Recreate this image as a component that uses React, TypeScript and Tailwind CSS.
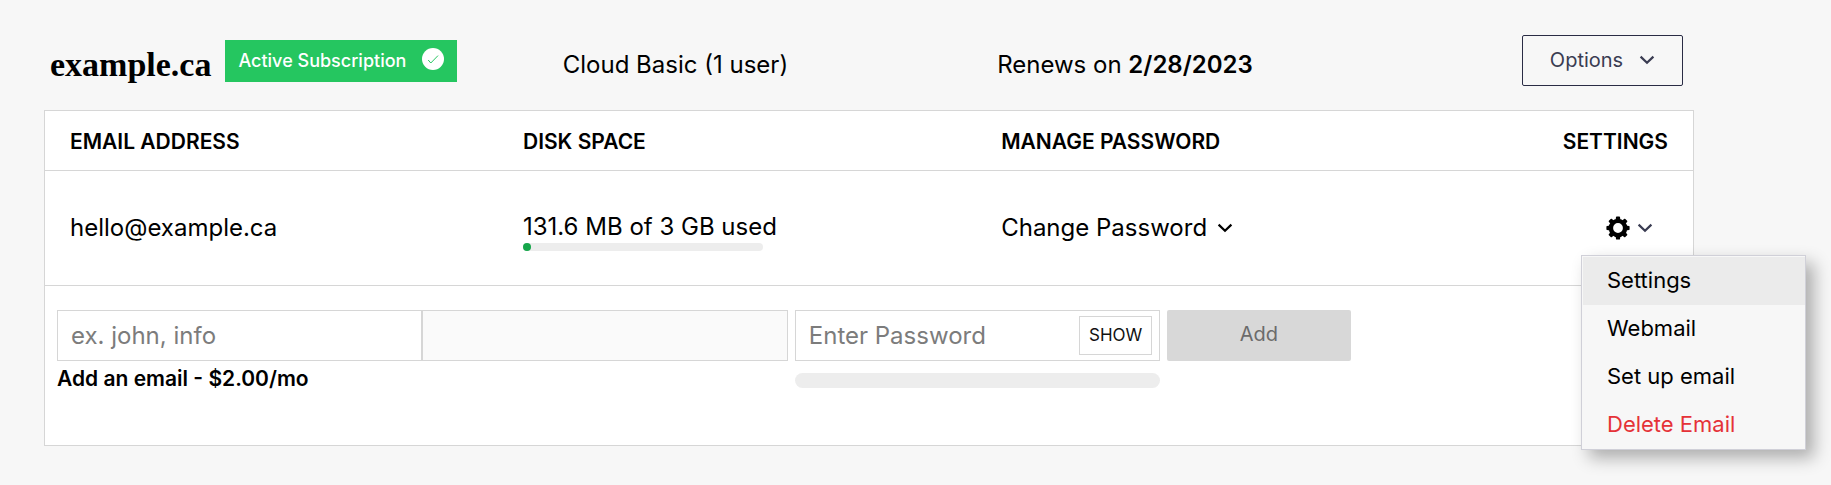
import { ReactNode } from "react";

function Chevron({ className = "" }: { className?: string }) {
  return (
    <svg viewBox="0 0 16 10" className={`h-[10px] w-4 shrink-0 ${className}`} fill="none" stroke="currentColor" strokeWidth="2.2" aria-hidden="true">
      <path d="M1.6 1.6 8 7.8l6.4-6.2" />
    </svg>
  );
}

function Gear() {
  const teeth = [0, 45, 90, 135, 180, 225, 270, 315];
  return (
    <svg viewBox="0 0 24 24" className="h-6 w-6 shrink-0" aria-hidden="true">
      <circle cx="12" cy="12" r="7.1" fill="none" stroke="currentColor" strokeWidth="4.4" />
      {teeth.map((angle) => (
        <path key={angle} d="M9.6 4 10 1q.1-.6.7-.6h2.6q.6 0 .7.6l.4 3z" fill="currentColor" transform={`rotate(${angle} 12 12)`} />
      ))}
    </svg>
  );
}

function CheckBadge() {
  return (
    <svg viewBox="0 0 22 22" className="-mt-1 h-[22px] w-[22px] shrink-0" aria-hidden="true">
      <circle cx="11" cy="11" r="11" fill="#fff" />
      <path d="m6.2 12 2.6 3L16 7.6" fill="none" stroke="#25c660" strokeWidth="1" />
    </svg>
  );
}

function HeaderCell({ children, className = "" }: { children: ReactNode; className?: string }) {
  return (
    <th scope="col" className={`h-[60px] px-[25px] pt-0.5 text-left text-[21px] leading-7 font-semibold whitespace-nowrap ${className}`}>
      {children}
    </th>
  );
}

const menuItems = [
  { label: "Settings", style: "bg-[#ebebeb]" },
  { label: "Webmail", style: "" },
  { label: "Set up email", style: "" },
  { label: "Delete Email", style: "text-[#e53238]" },
];

export default function App() {
  return (
    <main className="min-h-screen bg-[#f7f7f7] pt-[35px] pr-[137px] pb-9 pl-11 font-['Inter',sans-serif] text-black">
      <header className="flex h-[51px] pr-[11px] pl-[6px]">
        <div className="flex w-[31.4%] items-start gap-[14px] pt-[5px] whitespace-nowrap">
          <h1 className="pt-1 font-['Liberation_Serif',serif] text-[34px] leading-[42px] font-bold">example.ca</h1>
          <span className="flex h-[42px] items-center gap-4 bg-[#25c660] px-[13px] text-lg font-medium text-white">
            Active Subscription
            <CheckBadge />
          </span>
        </div>
        <p className="w-[26.6%] self-center pt-2 text-2xl whitespace-nowrap">Cloud Basic (1 user)</p>
        <p className="self-center pt-2 text-2xl whitespace-nowrap">
          Renews on <strong className="font-semibold">2/28/2023</strong>
        </p>
        <button type="button" className="ml-auto flex w-[161px] items-center justify-center gap-4 rounded-xs border border-[#2a2c45] pb-0.5 text-xl text-[#3a3c52]">
          Options
          <Chevron />
        </button>
      </header>

      <table className="mt-6 w-full table-fixed border-collapse border border-[#d6d6d6] bg-white">
        <colgroup>
          <col className="w-[27.5%]" />
          <col className="w-[29%]" />
          <col />
          <col className="w-[20%]" />
        </colgroup>
        <thead>
          <tr className="border-b border-[#d6d6d6]">
            <HeaderCell>EMAIL ADDRESS</HeaderCell>
            <HeaderCell>DISK SPACE</HeaderCell>
            <HeaderCell>MANAGE PASSWORD</HeaderCell>
            <HeaderCell className="text-right">SETTINGS</HeaderCell>
          </tr>
        </thead>
        <tbody>
          <tr className="h-[115px] border-b border-[#d6d6d6] text-2xl whitespace-nowrap">
            <td className="px-[25px]">hello@example.ca</td>
            <td className="px-[25px]">
              <div className="flex flex-col pt-[6px]">
                <span className="leading-8">131.6 MB of 3 GB used</span>
                <div className="h-2 w-60 rounded-sm bg-[#ededed]">
                  <div className="h-2 w-2 rounded-sm bg-[#16a64a]" />
                </div>
              </div>
            </td>
            <td className="px-[25px]">
              <button type="button" className="flex items-center gap-[10px]">
                Change Password
                <Chevron />
              </button>
            </td>
            <td className="pr-10">
              <div className="relative ml-auto w-fit">
                <button type="button" aria-label="Email settings" aria-expanded="true" className="flex items-center gap-[7px]">
                  <Gear />
                  <Chevron className="text-[#3a3c52]" />
                </button>
                <ul className="absolute top-[39px] -left-[25px] w-[225px] border border-[#d0d0d8] bg-[#f7f7f7] pt-px pl-px text-[22px] shadow-[8px_8px_16px_rgba(0,0,0,0.3)]">
                  {menuItems.map(({ label, style }) => (
                    <li key={label}>
                      <a href="#" className={`flex h-12 items-center pl-6 ${style}`}>
                        {label}
                      </a>
                    </li>
                  ))}
                </ul>
              </div>
            </td>
          </tr>
          <tr className="h-[160px] align-top">
            <td colSpan={4} className="px-3 pt-6">
              <form className="flex items-start">
                <div className="w-[22.5%]">
                  <input id="mailbox" type="text" placeholder="ex. john, info" className="block h-[51px] w-full border border-[#d6d6d6] px-[13px] text-2xl placeholder:text-[#7c7c7c]" />
                  <label htmlFor="mailbox" className="block pt-1 text-[21px] leading-7 font-semibold whitespace-nowrap">
                    Add an email - $2.00/mo
                  </label>
                </div>
                <input type="text" aria-label="Domain" disabled className="h-[51px] w-[22.5%] border border-[#d6d6d6] bg-[#fafafa]" />
                <div className="ml-[7px] w-[22.5%]">
                  <div className="flex h-[51px] items-center border border-[#d6d6d6] pr-[7px]">
                    <input type="password" aria-label="Password" placeholder="Enter Password" className="h-full min-w-0 flex-1 px-[13px] text-2xl placeholder:text-[#7c7c7c]" />
                    <button type="button" className="h-[39px] w-[73px] border border-[#d6d6d6] text-[17px] text-[#111]">
                      SHOW
                    </button>
                  </div>
                  <div className="mt-3 h-[15px] rounded-full bg-[#ededed]" />
                </div>
                <button type="submit" disabled className="ml-[7px] h-[51px] w-[11.3%] rounded-xs bg-[#d8d8d8] pb-1 text-xl text-[#6b6b6b]">
                  Add
                </button>
              </form>
            </td>
          </tr>
        </tbody>
      </table>
    </main>
  );
}
